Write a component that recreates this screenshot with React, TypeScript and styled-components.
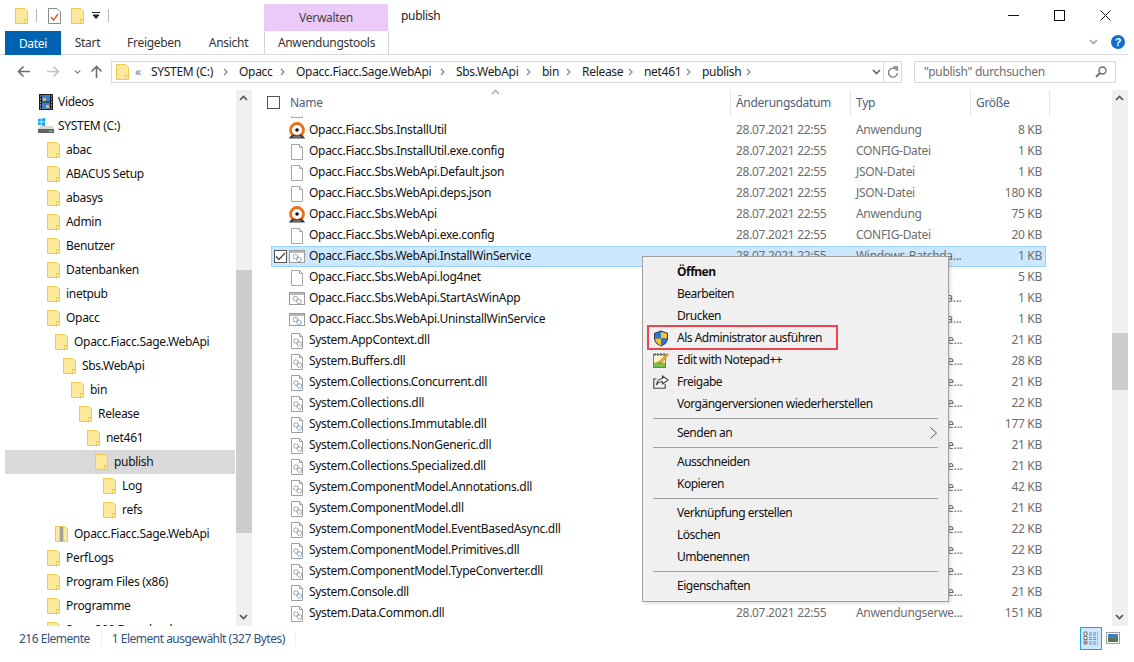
import React from "react";
import styled, { createGlobalStyle } from "styled-components";

const Global = createGlobalStyle`
  html, body { margin: 0; padding: 0; background: #fff; }
  body { font-family: "Noto Sans", "Open Sans", sans-serif; font-size: 12px; color: #111; }
  * { box-sizing: border-box; }
`;

const Page = styled.div`
  position: relative; width: 1134px; height: 662px; overflow: hidden; padding-right: 6px;
  letter-spacing: -0.3px;
`;
const Label = styled.span`display: block; margin-top: -2px;`;
const TitleBar = styled.div`display: flex; height: 31px;`;
const QuickAccess = styled.div`display: flex; align-items: center; width: 264px; padding: 0 0 0 15px; height: 31px;`;
const QuickSep = styled.div<{ $gapL: number; $gapR: number }>`
  width: 1px; height: 13px; background: #b5b5b5; margin: 0 ${p => p.$gapR}px 0 ${p => p.$gapL}px;
`;
const ContextHead = styled.div`
  width: 124px; height: 27px; margin-top: 4px; background: #ebc9f9; color: #444;
  display: flex; align-items: center; justify-content: center;
`;
const WindowTitle = styled.div`flex: 1; padding: 7px 0 0 13px; color: #222;`;
const WinButton = styled.div`width: 46px; height: 31px; display: flex; align-items: center; justify-content: center; padding-bottom: 1px;`;

const Tabs = styled.div`display: flex; height: 24px; padding-left: 5px; border-bottom: 1px solid #dcdcdc; align-items: stretch;`;
const FileTab = styled.div`width: 56px; background: #0063b1; color: #fff; display: flex; align-items: center; justify-content: center; margin-bottom: -1px;`;
const Tab = styled.div<{ $w: number }>`width: ${p => p.$w}px; display: flex; align-items: center; justify-content: center; color: #333;`;
const ContextTab = styled.div`
  width: 125px; background: #fff; border-left: 1px solid #d4d4d4; border-right: 1px solid #d4d4d4;
  display: flex; align-items: center; justify-content: center; color: #333; margin-left: 1px;
`;
const TabEnd = styled.div`flex: 1; display: flex; justify-content: flex-end; align-items: center; padding-right: 3px; gap: 13px; margin-top: -2px;`;
const HelpDot = styled.div`
  width: 14px; height: 14px; border-radius: 50%; background: #0f6fd0; color: #fff;
  font: bold 11px "Liberation Sans", sans-serif; display: flex; align-items: center; justify-content: center; letter-spacing: 0;
`;

const AddressRow = styled.div`display: flex; height: 35px; align-items: flex-start; padding-top: 6px;`;
const NavArrows = styled.div`display: flex; align-items: center; width: 111px; height: 22px; padding-left: 17px;`;
const AddressBox = styled.div`
  width: 791px; height: 22px; border: 1px solid #d9d9d9; display: flex; align-items: center; padding-left: 4px;
`;
const Crumbs = styled.div`flex: 1; display: flex; align-items: center; margin-left: 6px; color: #1c1c1c;`;
const Crumb = styled.span<{ $w: number }>`
  display: inline-flex; flex: none; width: ${p => p.$w}px; align-items: center; white-space: nowrap; padding-right: 7px;
`;
const CrumbText = styled(Label)`flex: 1;`;
const Ellipsis = styled(Label)`width: 16px; color: #777; flex: none;`;
const AddrSpring = styled.div`flex: 1;`;
const AddrChevron = styled.div`width: 24px; display: flex; justify-content: center; padding-left: 10px;`;
const RefreshCell = styled.div`width: 18px; height: 20px; border-left: 1px solid #d9d9d9; display: flex; align-items: center; justify-content: center;`;
const SearchBox = styled.div`
  width: 202px; height: 22px; margin-left: 12px; border: 1px solid #d9d9d9; color: #6d6d6d;
  display: flex; align-items: center; justify-content: space-between; padding: 0 8px 0 9px;
`;

const Main = styled.div`display: flex; height: 536px;`;
const NavPane = styled.div`width: 236px; height: 536px; overflow: hidden; padding-left: 5px;`;
const NavRow = styled.div<{ $level: number; $sel?: boolean }>`
  width: 230px; height: 24px; display: flex; align-items: center; gap: 6px; white-space: nowrap;
  padding-left: ${p => 42 + p.$level * 8}px;
  background: ${p => (p.$sel ? "#d9d9d9" : "transparent")};
`;
const RootRow = styled(NavRow)`gap: 5px;`;
const Track = styled.div`width: 16px; height: 536px; background: #f0f0f0; position: relative; flex: none;`;
const Thumb = styled.div<{ $top: number; $h: number }>`
  position: absolute; left: 0; right: 0; top: ${p => p.$top}px; height: ${p => p.$h}px; background: #cdcdcd;
`;
const ArrowTop = styled.div`position: absolute; left: 3px; top: 5px; width: 10px; height: 7px; display: flex;`;
const ArrowBottom = styled(ArrowTop)`top: auto; bottom: 5px;`;

const FilePane = styled.div`flex: 1; display: flex; flex-direction: column; min-width: 0; position: relative;`;
const HeaderRow = styled.div`display: flex; height: 26px; padding-left: 15px; flex: none; position: relative; color: #4c607a;`;
const HeadName = styled.div`width: 463px; display: flex; align-items: center; gap: 10px; padding-bottom: 1px;`;
const HeadCell = styled.div<{ $w: number }>`
  width: ${p => p.$w}px; border-left: 1px solid #e5e5e5; padding: 0 0 1px 5px; display: flex; align-items: center;
`;
const HeadEnd = styled.div`width: 1px; background: #e5e5e5;`;
const Box = styled.div<{ $bg?: string }>`
  width: 13px; height: 13px; border: 1px solid #555; background: ${p => p.$bg ?? "#fff"};
  display: flex; align-items: center; justify-content: center; flex: none;
`;
const RowBox = styled(Box)`margin-right: -2px;`;
const SortCaret = styled.div`position: absolute; left: 239px; top: -1px; display: flex;`;
const ListClip = styled.div`flex: 1; overflow: hidden; padding-left: 19px;`;
const List = styled.div`margin-top: -17px;`;
const FileRow = styled.div<{ $sel?: boolean }>`
  width: 775px; height: 21px; display: grid; grid-template-columns: 465px 120px 120px 70px; align-items: center;
  white-space: nowrap; color: #6d6d6d;
  background: ${p => (p.$sel ? "#cce8ff" : "transparent")};
  outline: ${p => (p.$sel ? "1px solid #99d1ff" : "none")}; outline-offset: -1px;
`;
const NameCell = styled.div<{ $sel?: boolean }>`
  display: flex; align-items: center; gap: 4px; color: #111; padding-left: ${p => (p.$sel ? 3 : 18)}px;
`;
const SizeCell = styled(Label)`text-align: right; padding-right: 4px;`;

const StatusBar = styled.div`display: flex; height: 24px; align-items: center; padding-left: 19px; color: #33507a; letter-spacing: -0.5px;`;
const StatusSep = styled.div<{ $m: string }>`width: 1px; height: 16px; background: #efefef; margin: ${p => p.$m};`;
const StatusSpring = styled.div`flex: 1;`;
const ViewBtn = styled.div`
  width: 22px; height: 23px; background: #cce8ff; border: 1px solid #26a0da; display: flex; align-items: center; justify-content: center;
`;
const ViewAlt = styled.div`width: 14px; margin: 0 8px 0 4px; display: flex;`;

const Menu = styled.div`
  position: absolute; left: 642px; top: 256px; width: 307px; height: 346px; background: #f0f0f0;
  border: 1px solid #a0a0a0; padding: 4px 0; box-shadow: 2px 2px 3px rgba(0,0,0,0.12); color: #111; letter-spacing: -0.5px;
`;
const MenuItem = styled.div<{ $bold?: boolean }>`
  position: relative; height: 22px; display: flex; align-items: center; padding-left: 34px;
  font-weight: ${p => (p.$bold ? 700 : 400)}; white-space: nowrap;
`;
const MenuIcon = styled.div`position: absolute; left: 9px; top: 2px; width: 18px; height: 18px; display: flex; align-items: center; justify-content: center;`;
const MenuArrow = styled.div`position: absolute; right: 11px; top: 5px; display: flex;`;
const MenuSep = styled.div`height: 1px; margin: 3px 10px; background: #a0a0a0;`;
const RedMark = styled.div`position: absolute; left: 4px; top: -2px; width: 191px; height: 25px; border: 2.5px solid #f0444c;`;
const Gap = styled.span<{ $w: number }>`width: ${p => p.$w}px; flex: none;`;

const Folder = () => (
  <svg width="13" height="16" viewBox="0 0 13 16" style={{ flex: "none" }}>
    <path d="M.5.5h9l3 2.5v12.5H.5z" fill="#fde99c" stroke="#efc94f" />
    <path d="M9.5 15.5v-4h3" fill="none" stroke="#efc94f" />
  </svg>
);
const ZipFolder = () => (
  <svg width="13" height="16" viewBox="0 0 13 16" style={{ flex: "none" }}>
    <path d="M.5.5h9l3 2.5v12.5H.5z" fill="#fde99c" stroke="#efc94f" />
    <rect x="4.5" y="1" width="4" height="14" fill="#bdbdbd" />
    <path d="M5 2h3M5 4h3M5 6h3M5 8h3M5 10h3M5 12h3M5 14h3" stroke="#666" strokeWidth=".7" />
  </svg>
);
const Blank = () => (
  <svg width="16" height="16" viewBox="0 0 16 16" style={{ flex: "none" }}>
    <path d="M2.5.5h8l3 3v12h-11z" fill="#fff" stroke="#a8a8a8" />
    <path d="M10.5.5v3h3" fill="none" stroke="#a8a8a8" />
  </svg>
);
const Gears = ({ x, y }: { x: number; y: number }) => (
  <g transform={`translate(${x} ${y})`} fill="none">
    <circle cx="3" cy="3" r="2.2" stroke="#9a9a9a" strokeWidth="1.3" strokeDasharray="1.2 .5" />
    <circle cx="6.5" cy="6" r="2.2" stroke="#7fa5c4" strokeWidth="1.3" strokeDasharray="1.2 .5" />
  </g>
);
const Dll = () => (
  <svg width="16" height="16" viewBox="0 0 16 16" style={{ flex: "none" }}>
    <path d="M2.5.5h8l3 3v12h-11z" fill="#fff" stroke="#a0a0a0" />
    <path d="M10.5.5v3h3" fill="none" stroke="#a0a0a0" />
    <Gears x={4} y={5} />
  </svg>
);
const Bat = () => (
  <svg width="16" height="16" viewBox="0 0 16 16" style={{ flex: "none" }}>
    <rect x=".5" y="1.5" width="15" height="12" fill="#fff" stroke="#9c9c9c" />
    <rect x="1" y="2" width="14" height="2" fill="#b8b8b8" />
    <Gears x={3.5} y={4.5} />
  </svg>
);
const AppIcon = () => (
  <svg width="18" height="18" viewBox="0 0 18 18" style={{ flex: "none", margin: "-1px -1px -1px -1px" }}>
    <circle cx="9" cy="8" r="6.500" fill="#fff" stroke="#ea6f1a" strokeWidth="2.800" />
    <path d="M1 16.500c1-2 2.500-3.500 4-4 2.500 1.400 5.500 1.400 8 0 1.500.5 3 2 4 4z" fill="#3c3c3c" />
    <path d="M5 15h8" stroke="#9a9a9a" />
    <circle cx="9" cy="8" r="1.800" fill="#111" />
  </svg>
);
const Video = () => (
  <svg width="14" height="16" viewBox="0 0 14 16" style={{ flex: "none" }}>
    <rect width="14" height="16" fill="#222" />
    <rect x="3" y="1" width="8" height="6.5" fill="#3a7fd6" />
    <rect x="3" y="8.5" width="8" height="6.5" fill="#3a7fd6" />
    <path d="M4 4h3v3H4zM7 11h3v3H7z" fill="#e6b83c" />
    <path d="M1 2h1M1 5h1M1 8h1M1 11h1M1 14h1M12 2h1M12 5h1M12 8h1M12 11h1M12 14h1" stroke="#ddd" />
  </svg>
);
const Drive = () => (
  <svg width="16" height="16" viewBox="0 0 16 16" style={{ flex: "none", marginLeft: -1, marginRight: -1 }}>
    <path d="M2 8h13l1 3v4H0v-4z" fill="#d8d8d8" />
    <rect y="11" width="16" height="4" fill="#5f6468" />
    <rect x="11" y="12.5" width="3" height="1.5" fill="#4be04b" />
    <path d="M0 1l2.8-.5v3H0zM3.5.4L7 0v3.5H3.5zM0 4.2h2.8v3L0 6.8zM3.5 4.2H7V8l-3.5-.6z" fill="#14a6ee" />
  </svg>
);
const CheckDoc = () => (
  <svg width="13" height="16" viewBox="0 0 13 16">
    <path d="M.5.5h8.5l3.5 3.5v11.500H.5z" fill="#fff" stroke="#8a8a8a" />
    <path d="M3 9l2.500 3L10 6" fill="none" stroke="#e8572a" strokeWidth="1.400" />
  </svg>
);
const Chevron = ({ up, color = "#555", w = 9 }: { up?: boolean; color?: string; w?: number }) => (
  <svg width={w} height="6" viewBox="0 0 9 6">
    <path d={up ? "M1 5l3.500-3.500L8 5" : "M1 1l3.500 3.500L8 1"} fill="none" stroke={color} strokeWidth="1.700" />
  </svg>
);
const Sep = () => (
  <svg width="12" height="10" viewBox="0 0 12 10" style={{ flex: "none" }}>
    <path d="M4 2l3 3-3 3" fill="none" stroke="#8a8a8a" strokeWidth="1.300" />
  </svg>
);
const Arrow = ({ dir, color }: { dir: "l" | "r" | "u"; color: string }) => {
  const d = dir === "l" ? "M13 6.500H1.500M6.500 1.500l-5 5 5 5" : dir === "r" ? "M1 6.500h11.500M7.500 1.500l5 5-5 5" : "M6.500 13V1.500M1.500 6.500l5-5 5 5";
  return (
    <svg width="14" height="14" viewBox="0 0 14 14" style={{ flex: "none" }}>
      <path d={d} fill="none" stroke={color} strokeWidth="1.600" />
    </svg>
  );
};
const Shield = () => (
  <svg width="16" height="17" viewBox="0 0 16 17">
    <path d="M8 .5l7 2.500v5c0 4-3 7-7 8.500-4-1.500-7-4.500-7-8.500V3z" fill="#333e52" />
    <path d="M8 1.700V8.500H2V3.700z" fill="#2b78d6" />
    <path d="M8 1.700l6 2v4.800H8z" fill="#f7c42c" />
    <path d="M2 8.500h6v7.200c-3-1.300-5.600-3.700-6-7.200z" fill="#f7c42c" />
    <path d="M8 8.500h6c-.4 3.500-3 5.900-6 7.200z" fill="#2b78d6" />
  </svg>
);
const Notepad = () => (
  <svg width="16" height="16" viewBox="0 0 16 16">
    <rect x=".5" y="2.500" width="12" height="13" fill="#fdf7c6" stroke="#777" />
    <path d="M1 11l5-2 6 2v4H1z" fill="#7cc04a" />
    <path d="M2 1v3M5 1v3M8 1v3M11 1v3" stroke="#555" />
    <path d="M6 10L14 1.500l1.500 1.500L8 11l-2.500 1z" fill="#f2b13a" stroke="#a8611c" strokeWidth=".6" />
  </svg>
);
const Share = () => (
  <svg width="16" height="14" viewBox="0 0 16 14">
    <path d="M3.500 4H.8v9.200h11.400V9" fill="none" stroke="#444" strokeWidth="1.100" />
    <path d="M9.500 1l5.500 4-5.500 4V6.500C7 6.500 5 7.500 3.500 10c.3-3.500 2.500-6 6-6.500z" fill="#fff" stroke="#444" strokeWidth="1.100" />
  </svg>
);

type NavItem = { label: string; level: number; kind?: "video" | "drive" | "zip"; sel?: boolean };
const nav: NavItem[] = [
  { label: "Videos", level: -1, kind: "video" },
  { label: "SYSTEM (C:)", level: -1, kind: "drive" },
  { label: "abac", level: 0 },
  { label: "ABACUS Setup", level: 0 },
  { label: "abasys", level: 0 },
  { label: "Admin", level: 0 },
  { label: "Benutzer", level: 0 },
  { label: "Datenbanken", level: 0 },
  { label: "inetpub", level: 0 },
  { label: "Opacc", level: 0 },
  { label: "Opacc.Fiacc.Sage.WebApi", level: 1 },
  { label: "Sbs.WebApi", level: 2 },
  { label: "bin", level: 3 },
  { label: "Release", level: 4 },
  { label: "net461", level: 5 },
  { label: "publish", level: 6, sel: true },
  { label: "Log", level: 7 },
  { label: "refs", level: 7 },
  { label: "Opacc.Fiacc.Sage.WebApi", level: 1, kind: "zip" },
  { label: "PerfLogs", level: 0 },
  { label: "Program Files (x86)", level: 0 },
  { label: "Programme", level: 0 },
  { label: "Sage 300 Downloads", level: 0 },
];

type Kind = "app" | "file" | "bat" | "dll";
const APP = "Anwendung", CFG = "CONFIG-Datei", JSN = "JSON-Datei", BAT = "Windows-Batchda...", EXT = "Anwendungserwe...";
const files: [string, Kind, string, string][] = [
  ["Opacc.Fiacc.Sbs.Hosting.dll", "file", EXT, "12 KB"],
  ["Opacc.Fiacc.Sbs.InstallUtil", "app", APP, "8 KB"],
  ["Opacc.Fiacc.Sbs.InstallUtil.exe.config", "file", CFG, "1 KB"],
  ["Opacc.Fiacc.Sbs.WebApi.Default.json", "file", JSN, "1 KB"],
  ["Opacc.Fiacc.Sbs.WebApi.deps.json", "file", JSN, "180 KB"],
  ["Opacc.Fiacc.Sbs.WebApi", "app", APP, "75 KB"],
  ["Opacc.Fiacc.Sbs.WebApi.exe.config", "file", CFG, "20 KB"],
  ["Opacc.Fiacc.Sbs.WebApi.InstallWinService", "bat", BAT, "1 KB"],
  ["Opacc.Fiacc.Sbs.WebApi.log4net", "file", "LOG4NET-Datei", "5 KB"],
  ["Opacc.Fiacc.Sbs.WebApi.StartAsWinApp", "bat", BAT, "1 KB"],
  ["Opacc.Fiacc.Sbs.WebApi.UninstallWinService", "bat", BAT, "1 KB"],
  ["System.AppContext.dll", "dll", EXT, "21 KB"],
  ["System.Buffers.dll", "dll", EXT, "28 KB"],
  ["System.Collections.Concurrent.dll", "dll", EXT, "21 KB"],
  ["System.Collections.dll", "dll", EXT, "22 KB"],
  ["System.Collections.Immutable.dll", "dll", EXT, "177 KB"],
  ["System.Collections.NonGeneric.dll", "dll", EXT, "21 KB"],
  ["System.Collections.Specialized.dll", "dll", EXT, "21 KB"],
  ["System.ComponentModel.Annotations.dll", "dll", EXT, "42 KB"],
  ["System.ComponentModel.dll", "dll", EXT, "21 KB"],
  ["System.ComponentModel.EventBasedAsync.dll", "dll", EXT, "22 KB"],
  ["System.ComponentModel.Primitives.dll", "dll", EXT, "22 KB"],
  ["System.ComponentModel.TypeConverter.dll", "dll", EXT, "23 KB"],
  ["System.Console.dll", "dll", EXT, "21 KB"],
  ["System.Data.Common.dll", "dll", EXT, "151 KB"],
  ["System.Data.SqlClient.dll", "dll", EXT, "21 KB"],
];
const fileIcon = (k: Kind) => (k === "app" ? <AppIcon /> : k === "file" ? <Blank /> : k === "bat" ? <Bat /> : <Dll />);

const crumbs: [string, number][] = [
  ["SYSTEM (C:)", 88], ["Opacc", 57], ["Opacc.Fiacc.Sage.WebApi", 160], ["Sbs.WebApi", 86],
  ["bin", 40], ["Release", 62], ["net461", 58], ["publish", 60],
];

export default function App() {
  return (
    <Page>
      <Global />
      <TitleBar>
        <QuickAccess>
          <Folder />
          <QuickSep $gapL={8} $gapR={11} />
          <CheckDoc />
          <Gap $w={10} />
          <Folder />
          <Gap $w={8} />
          <svg width="8" height="7" viewBox="0 0 8 7"><path d="M0 .5h8M1 3h6L4 6.500z" stroke="#222" fill="#222" strokeWidth="1" /></svg>
          <QuickSep $gapL={8} $gapR={0} />
        </QuickAccess>
        <ContextHead>Verwalten</ContextHead>
        <WindowTitle>publish</WindowTitle>
        <WinButton><svg width="11" height="1"><rect width="11" height="1" fill="#111" /></svg></WinButton>
        <WinButton><svg width="11" height="11"><rect x=".5" y=".5" width="10" height="10" fill="none" stroke="#111" /></svg></WinButton>
        <WinButton><svg width="11" height="11"><path d="M.5.5l10 10M10.500.5l-10 10" stroke="#111" /></svg></WinButton>
      </TitleBar>
      <Tabs>
        <FileTab>Datei</FileTab>
        <Tab $w={53}>Start</Tab>
        <Tab $w={80}>Freigeben</Tab>
        <Tab $w={69}>Ansicht</Tab>
        <ContextTab>Anwendungstools</ContextTab>
        <TabEnd>
          <Chevron color="#a8a8a8" />
          <HelpDot>?</HelpDot>
        </TabEnd>
      </Tabs>
      <AddressRow>
        <NavArrows>
          <Arrow dir="l" color="#6d6d6d" />
          <Gap $w={15} />
          <Arrow dir="r" color="#c4c4c4" />
          <Gap $w={14} />
          <Chevron color="#8a8a8a" w={7} />
          <Gap $w={9} />
          <Arrow dir="u" color="#6d6d6d" />
        </NavArrows>
        <AddressBox>
          <Folder />
          <Crumbs>
            <Ellipsis>«</Ellipsis>
            {crumbs.map(([label, w]) => (
              <Crumb $w={w} key={label}>
                <CrumbText>{label}</CrumbText>
                <Sep />
              </Crumb>
            ))}
            <AddrSpring />
          </Crumbs>
          <AddrChevron><Chevron color="#666" /></AddrChevron>
          <RefreshCell>
            <svg width="12" height="13" viewBox="0 0 12 13">
              <path d="M9.800 4.200A4.500 4.500 0 1 0 10.500 7" fill="none" stroke="#777" strokeWidth="1.300" />
              <path d="M6.500 1h3.800v3.800" fill="none" stroke="#777" strokeWidth="1.300" />
            </svg>
          </RefreshCell>
        </AddressBox>
        <SearchBox>
          <Label>"publish" durchsuchen</Label>
          <svg width="12" height="12" viewBox="0 0 12 12">
            <circle cx="7.500" cy="4.500" r="3.500" fill="none" stroke="#6d6d6d" strokeWidth="1.400" />
            <path d="M5 7l-4 4" stroke="#6d6d6d" strokeWidth="1.800" />
          </svg>
        </SearchBox>
      </AddressRow>
      <Main>
        <NavPane>
          {nav.map((n, i) => {
            const Row = n.level < 0 ? RootRow : NavRow;
            return (
              <Row key={i} $level={n.level} $sel={n.sel}>
                {n.kind === "video" ? <Video /> : n.kind === "drive" ? <Drive /> : n.kind === "zip" ? <ZipFolder /> : <Folder />}
                <Label>{n.label}</Label>
              </Row>
            );
          })}
        </NavPane>
        <Track>
          <Thumb $top={180} $h={263} />
          <ArrowTop><Chevron up color="#555" /></ArrowTop>
          <ArrowBottom><Chevron color="#555" /></ArrowBottom>
        </Track>
        <FilePane>
          <HeaderRow>
            <HeadName><Box /><span>Name</span></HeadName>
            <HeadCell $w={120}>Änderungsdatum</HeadCell>
            <HeadCell $w={120}>Typ</HeadCell>
            <HeadCell $w={79}>Größe</HeadCell>
            <HeadEnd />
            <SortCaret><Chevron up color="#b0b0b0" /></SortCaret>
          </HeaderRow>
          <ListClip>
            <List>
              {files.map(([name, kind, type, size]) => {
                const sel = name.endsWith(".InstallWinService");
                return (
                  <FileRow key={name} $sel={sel}>
                    <NameCell $sel={sel}>
                      {sel && (
                        <RowBox>
                          <svg width="11" height="9" viewBox="0 0 11 9"><path d="M1 4.500l3 3L10 1" fill="none" stroke="#333" strokeWidth="1.200" /></svg>
                        </RowBox>
                      )}
                      {fileIcon(kind)}
                      <Label>{name}</Label>
                    </NameCell>
                    <Label>28.07.2021 22:55</Label>
                    <Label>{type}</Label>
                    <SizeCell>{size}</SizeCell>
                  </FileRow>
                );
              })}
            </List>
          </ListClip>
        </FilePane>
        <Track>
          <Thumb $top={243} $h={57} />
          <ArrowTop><Chevron up color="#555" /></ArrowTop>
          <ArrowBottom><Chevron color="#555" /></ArrowBottom>
        </Track>
      </Main>
      <StatusBar>
        <span>216 Elemente</span>
        <StatusSep $m="0 10px 0 11px" />
        <span>1 Element ausgewählt (327 Bytes)</span>
        <StatusSep $m="0 0 0 10px" />
        <StatusSpring />
        <ViewBtn>
          <svg width="16" height="14" viewBox="0 0 16 14">
            <path d="M1 1h3v3H1zM1 5.500h3v3H1zM1 10h3v3H1z" fill="#fff" stroke="#555" strokeWidth=".8" />
            <rect x="1.500" y="11" width="2" height="1.500" fill="#d9534f" />
            <path d="M6 2h9M6 6.500h9M6 11h9M6 4h9M6 8.500h9M6 13h9" stroke="#7d8a96" strokeDasharray="3 1" />
          </svg>
        </ViewBtn>
        <ViewAlt>
          <svg width="14" height="12" viewBox="0 0 14 12">
            <rect x=".5" y=".5" width="13" height="11" fill="#fff" stroke="#a0a0a0" />
            <rect x="2" y="2" width="10" height="4" fill="#3f7fb5" />
            <rect x="2" y="6" width="10" height="4" fill="#4f7a52" />
          </svg>
        </ViewAlt>
      </StatusBar>
      <Menu>
        <MenuItem $bold><Label>Öffnen</Label></MenuItem>
        <MenuItem><Label>Bearbeiten</Label></MenuItem>
        <MenuItem><Label>Drucken</Label></MenuItem>
        <MenuItem>
          <MenuIcon><Shield /></MenuIcon>
          <Label>Als Administrator ausführen</Label>
          <RedMark />
        </MenuItem>
        <MenuItem><MenuIcon><Notepad /></MenuIcon><Label>Edit with Notepad++</Label></MenuItem>
        <MenuItem><MenuIcon><Share /></MenuIcon><Label>Freigabe</Label></MenuItem>
        <MenuItem><Label>Vorgängerversionen wiederherstellen</Label></MenuItem>
        <MenuSep />
        <MenuItem>
          <Label>Senden an</Label>
          <MenuArrow>
            <svg width="7" height="12" viewBox="0 0 7 12"><path d="M.5.500l6 5.500-6 5.500" fill="none" stroke="#555" /></svg>
          </MenuArrow>
        </MenuItem>
        <MenuSep />
        <MenuItem><Label>Ausschneiden</Label></MenuItem>
        <MenuItem><Label>Kopieren</Label></MenuItem>
        <MenuSep />
        <MenuItem><Label>Verknüpfung erstellen</Label></MenuItem>
        <MenuItem><Label>Löschen</Label></MenuItem>
        <MenuItem><Label>Umbenennen</Label></MenuItem>
        <MenuSep />
        <MenuItem><Label>Eigenschaften</Label></MenuItem>
      </Menu>
    </Page>
  );
}
